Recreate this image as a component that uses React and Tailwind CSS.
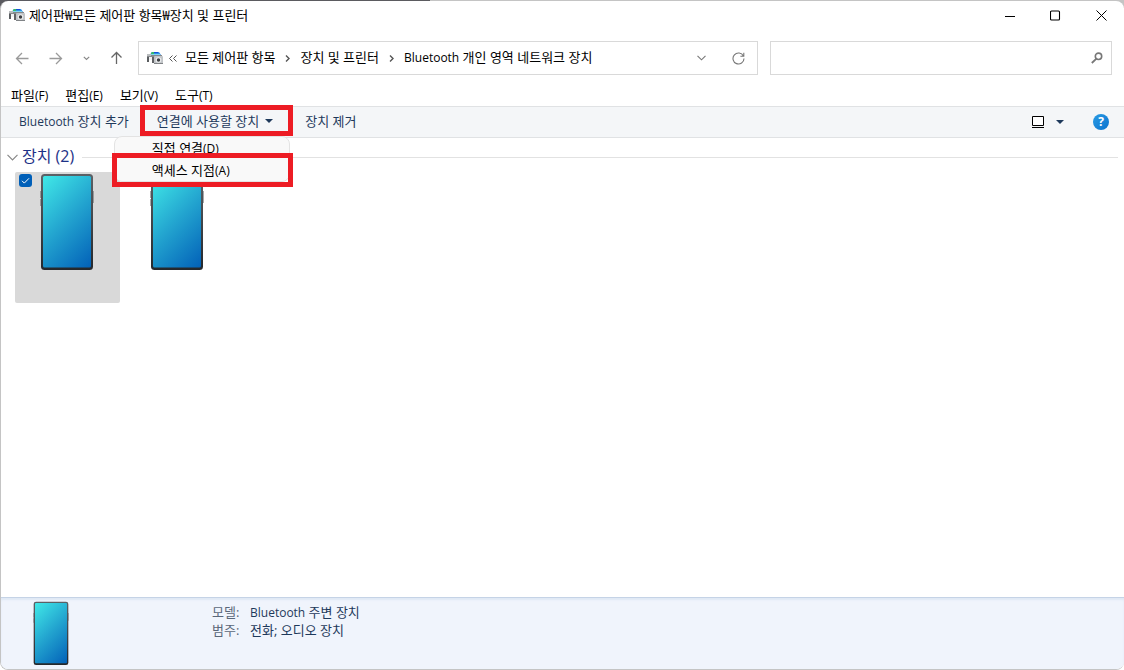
import { useState } from 'react';

const menus = ['파일(F)', '편집(E)', '보기(V)', '도구(T)'];
const crumbs = ['모든 제어판 항목', '장치 및 프린터', 'Bluetooth 개인 영역 네트워크 장치'];
const connectModes = ['직접 연결(D)', '액세스 지점(A)'];
const details = [
  { label: '모델:', value: 'Bluetooth 주변 장치' },
  { label: '범주:', value: '전화; 오디오 장치' },
];

// Latin runs are set one size below the Hangul so both look the same height
const Label = ({ children }) =>
  children.split(/([A-Za-z()]+)/).map((part, i) =>
    i % 2 ? <span key={i} className="text-[12px]">{part}</span> : part
  );

const PrinterIcon = () => (
  <svg width="16" height="16" viewBox="0 0 16 16" className="shrink-0">
    <path d="M4 3l1-1h7l2 3H3z" fill="#2f8fe8" />
    <path d="M4 3l1-1h2v2H4z" fill="#35b96a" />
    <path d="M7 2h4v1H7z" fill="#1550d8" />
    <path d="M4 4h9v1H4z" fill="#7fd6f0" />
    <path d="M0 5h15v3H0z" fill="#85888b" />
    <path d="M0 4h4v2H0z" fill="#b9bcbe" />
    <path d="M0 7h2v5H0z" fill="#5a5d60" />
    <path d="M2 7h4v3H2z" fill="#f2f3f4" />
    <path d="M5 7h2v6H5z" fill="#606265" />
    <rect x="7" y="6" width="9" height="8" rx="1" fill="#c2c5c8" />
    <path d="M7 13h9v1H7z" fill="#808386" />
    <circle cx="11.5" cy="10" r="2.8" fill="#eceeef" />
    <circle cx="11.5" cy="10" r="1.7" fill="#3c3f42" />
  </svg>
);

const Phone = ({ id, className }) => (
  <svg viewBox="0 0 54 97" preserveAspectRatio="none" className={className}>
    <defs>
      <linearGradient id={id} gradientUnits="userSpaceOnUse" x1="-9" y1="14" x2="63" y2="83">
        <stop offset="0" stopColor="#41eae8" />
        <stop offset="0.5" stopColor="#22a3cf" />
        <stop offset="1" stopColor="#0260b8" />
      </linearGradient>
      <linearGradient id={`${id}-frame`} x1="0" y1="0" x2="0" y2="1">
        <stop offset="0" stopColor="#5c6166" />
        <stop offset="1" stopColor="#25282c" />
      </linearGradient>
    </defs>
    <path d="M.4 18H1v7H.4zM.4 26H1v7H.4zM53 18h.6v12H53z" fill="#6b6e71" />
    <rect x="1" y="1" width="52" height="96" rx="3.5" fill={`url(#${id}-frame)`} />
    <rect x="3" y="3" width="48" height="91.5" rx="1.5" fill={`url(#${id})`} />
  </svg>
);

const Caret = () => (
  <svg width="8" height="4" viewBox="0 0 8 4">
    <path d="M0 0h8L4 4z" fill="#1e395b" />
  </svg>
);

const Arrow = ({ d, color }) => (
  <svg width="14" height="14" viewBox="0 0 14 14" fill="none" stroke={color} strokeWidth="1.3">
    <path d={d} />
  </svg>
);

const TitleBar = () => (
  <header className="flex h-7 items-center pl-2">
    <PrinterIcon />
    <h1 className="ml-1 flex-1">제어판₩모든 제어판 항목₩장치 및 프린터</h1>
    <button aria-label="최소화" className="flex h-full w-[45px] items-center justify-center">
      <svg width="11" height="11" viewBox="0 0 11 11" stroke="#000"><path d="M0 6.5h10" /></svg>
    </button>
    <button aria-label="최대화" className="flex h-full w-[45px] items-center justify-center">
      <svg width="11" height="11" viewBox="0 0 11 11" stroke="#000" fill="none">
        <rect x="0.5" y="1" width="9" height="9" rx="1" strokeWidth="1.1" />
      </svg>
    </button>
    <button aria-label="닫기" className="flex h-full w-[46px] items-center justify-center">
      <svg width="11" height="11" viewBox="0 0 11 11" stroke="#000"><path d="M.5.5l10 10M10.5.5l-10 10" /></svg>
    </button>
  </header>
);

const NavBar = () => (
  <div className="flex items-center gap-3 pt-3 pr-3 pl-3.5">
    <nav className="flex w-[111px] shrink-0 items-center justify-between pr-0.5">
      <button aria-label="뒤로"><Arrow color="#9a9a9a" d="M13.500 7.500h-12M7 2L1.500 7.500 7 13" /></button>
      <button aria-label="앞으로"><Arrow color="#9a9a9a" d="M.5 7.500h12M7 2l5.500 5.500L7 13" /></button>
      <button aria-label="최근 위치">
        <svg width="7" height="5" viewBox="0 0 7 5" fill="none" stroke="#8a8a8a" strokeWidth="1.2"><path d="M.8.8l2.700 2.700L6.200.8" /></svg>
      </button>
      <button aria-label="위로"><Arrow color="#666" d="M6.500 13V1.500M1.500 6.500l5-5 5 5" /></button>
    </nav>
    <div className="flex h-[34px] flex-1 items-center border border-[#d9d9d9] pl-2">
      <PrinterIcon />
      <svg width="8" height="7" viewBox="0 0 8 7" fill="none" stroke="#555" className="ml-1.5 mr-2">
        <path d="M3.500.5l-3 3 3 3M7.500.5l-3 3 3 3" />
      </svg>
      <ol className="flex flex-1 items-center pb-0.5">
        {crumbs.map((crumb, i) => (
          <li key={crumb} className="flex items-center">
            {i > 0 && (
              <svg width="5" height="7" viewBox="0 0 5 7" fill="none" stroke="#555" strokeWidth="1.4" className="mx-2.5 mt-0.5">
                <path d="M1 .5l3 3-3 3" />
              </svg>
            )}
            <a href="#"><Label>{crumb}</Label></a>
          </li>
        ))}
      </ol>
      <button aria-label="이전 위치" className="px-[26px]">
        <svg width="9" height="6" viewBox="0 0 9 6" fill="none" stroke="#777" strokeWidth="1.1"><path d="M.5.8l4 4 4-4" /></svg>
      </button>
      <button aria-label="새로 고침" className="pr-3">
        <svg width="13" height="13" viewBox="0 0 13 13" fill="none" stroke="#777" strokeWidth="1.1">
          <path d="M11.400 4A5.500 5.500 0 1 0 12 6.500M11.800.8v3.400H8.400" />
        </svg>
      </button>
    </div>
    <div className="flex h-[34px] w-[342px] items-center border border-[#d9d9d9] pr-2">
      <input type="text" aria-label="검색" className="h-full min-w-0 flex-1 px-2 outline-none" />
      <svg width="12" height="12" viewBox="0 0 12 12" fill="none" stroke="#777">
        <circle cx="7.500" cy="4.300" r="3.200" strokeWidth="1.600" />
        <path d="M5.200 6.800L.8 11" strokeWidth="1.800" />
      </svg>
    </div>
  </div>
);

const ConnectMenu = () => (
  <div className="relative flex h-full items-center">
    <button className="flex items-center gap-1.5 pb-0.5">
      연결에 사용할 장치
      <Caret />
    </button>
    <div className="absolute -top-0.5 -left-[17px] h-[31px] w-[153px] border-5 border-[#ed1c24]" />
    <ul className="absolute top-[29px] -left-[43px] w-[176px] rounded-lg border border-[#e3e3e3] bg-[#f9f9f9] text-black">
      {connectModes.map((mode) => (
        <li key={mode} className="h-[22px]">
          <button className="flex h-full w-full items-center pl-[37px]"><span><Label>{mode}</Label></span></button>
        </li>
      ))}
    </ul>
    <div className="absolute top-[46px] -left-[45px] h-[34px] w-[181px] border-5 border-[#ed1c24]" />
  </div>
);

const Toolbar = () => (
  <div className="relative z-10 flex h-8 items-center border-y border-[#e0e2e4] bg-[#f4f6f8] pr-[15px] pl-[18px] text-[#1e395b]">
    <button className="mr-7 pb-0.5"><Label>Bluetooth 장치 추가</Label></button>
    <ConnectMenu />
    <button className="ml-8 pb-0.5">장치 제거</button>
    <button aria-label="보기 변경" className="ml-auto flex items-center gap-3">
      <svg width="12" height="12" viewBox="0 0 12 12" fill="#fff" stroke="#000">
        <path d="M.5.5h11v9H.5zM0 11.500h12" />
      </svg>
      <Caret />
    </button>
    <button aria-label="도움말" className="ml-[29px] flex size-4 items-center justify-center rounded-full bg-linear-to-br from-[#2a9ce4] to-[#0a72ce] text-[12px] leading-4 font-bold text-white">
      ?
    </button>
  </div>
);

const DeviceTile = ({ id, selected, onToggle }) => (
  <label className={`relative h-[131px] w-[105px] rounded-xs pt-px pr-0.5 ${selected ? 'bg-[#d9d9d9]' : ''}`}>
    <input
      type="checkbox"
      aria-label="장치 선택"
      checked={selected}
      onChange={onToggle}
      className="absolute top-0.5 left-1 size-[13px] appearance-none rounded-[3px] checked:bg-[#005fb8]"
    />
    {selected && (
      <svg width="13" height="13" viewBox="0 0 13 13" fill="none" stroke="#fff" className="absolute top-0.5 left-1">
        <path d="M3 6.800l2.300 2.300L10 4.300" />
      </svg>
    )}
    <Phone id={id} className="mx-auto h-[97px] w-[54px]" />
  </label>
);

export default function App() {
  const [selected, setSelected] = useState('phone-a');

  return (
    <div className="flex min-h-screen flex-col bg-[linear-gradient(to_right,#5b5b60_430px,#c4c4c4_430px)] bg-[length:100%_8px] bg-no-repeat pt-px font-['Open_Sans','Noto_Sans_CJK_KR',sans-serif] text-[13px] leading-[18px] text-black">
      <div className="flex flex-1 flex-col overflow-hidden rounded-lg border-b border-l border-[#c4c4c4] bg-white">
        <TitleBar />
        <NavBar />
        <nav className="flex h-[31px] items-end gap-[17px] pb-px pl-2.5">
          {menus.map((menu) => (
            <button key={menu}><Label>{menu}</Label></button>
          ))}
        </nav>
        <Toolbar />

        <main className="flex-1">
          <div className="flex h-[34px] items-center gap-1 pt-1 pr-1.5 pl-1.5">
            <svg width="11" height="7" viewBox="0 0 11 7" fill="none" stroke="#888" strokeWidth="1.2"><path d="M.5.8l5 5 5-5" /></svg>
            <h2 className="pb-0.5 text-base text-[#1e3287]">장치 (2)</h2>
            <hr className="ml-1 flex-1 border-[#e2e2e2]" />
          </div>
          <div className="flex gap-[5px] pl-3.5">
            {['phone-a', 'phone-b'].map((id) => (
              <DeviceTile
                key={id}
                id={id}
                selected={selected === id}
                onToggle={() => setSelected(selected === id ? null : id)}
              />
            ))}
          </div>
        </main>

        <footer className="flex h-[72px] border-t border-[#c5d3e6] bg-[#f0f4fc] pt-[3px] pl-8 shadow-[inset_0_2px_2px_#dfe8f5]">
          <Phone id="phone-detail" className="h-16 w-9" />
          <dl className="ml-[143px] grid auto-rows-[18px] grid-cols-[38px_auto] pt-0.5 text-[#1e395b]">
            {details.map(({ label, value }) => (
              <div key={label} className="col-span-2 grid grid-cols-subgrid">
                <dt className="text-[#5a6779]">{label}</dt>
                <dd><Label>{value}</Label></dd>
              </div>
            ))}
          </dl>
        </footer>
      </div>
    </div>
  );
}
